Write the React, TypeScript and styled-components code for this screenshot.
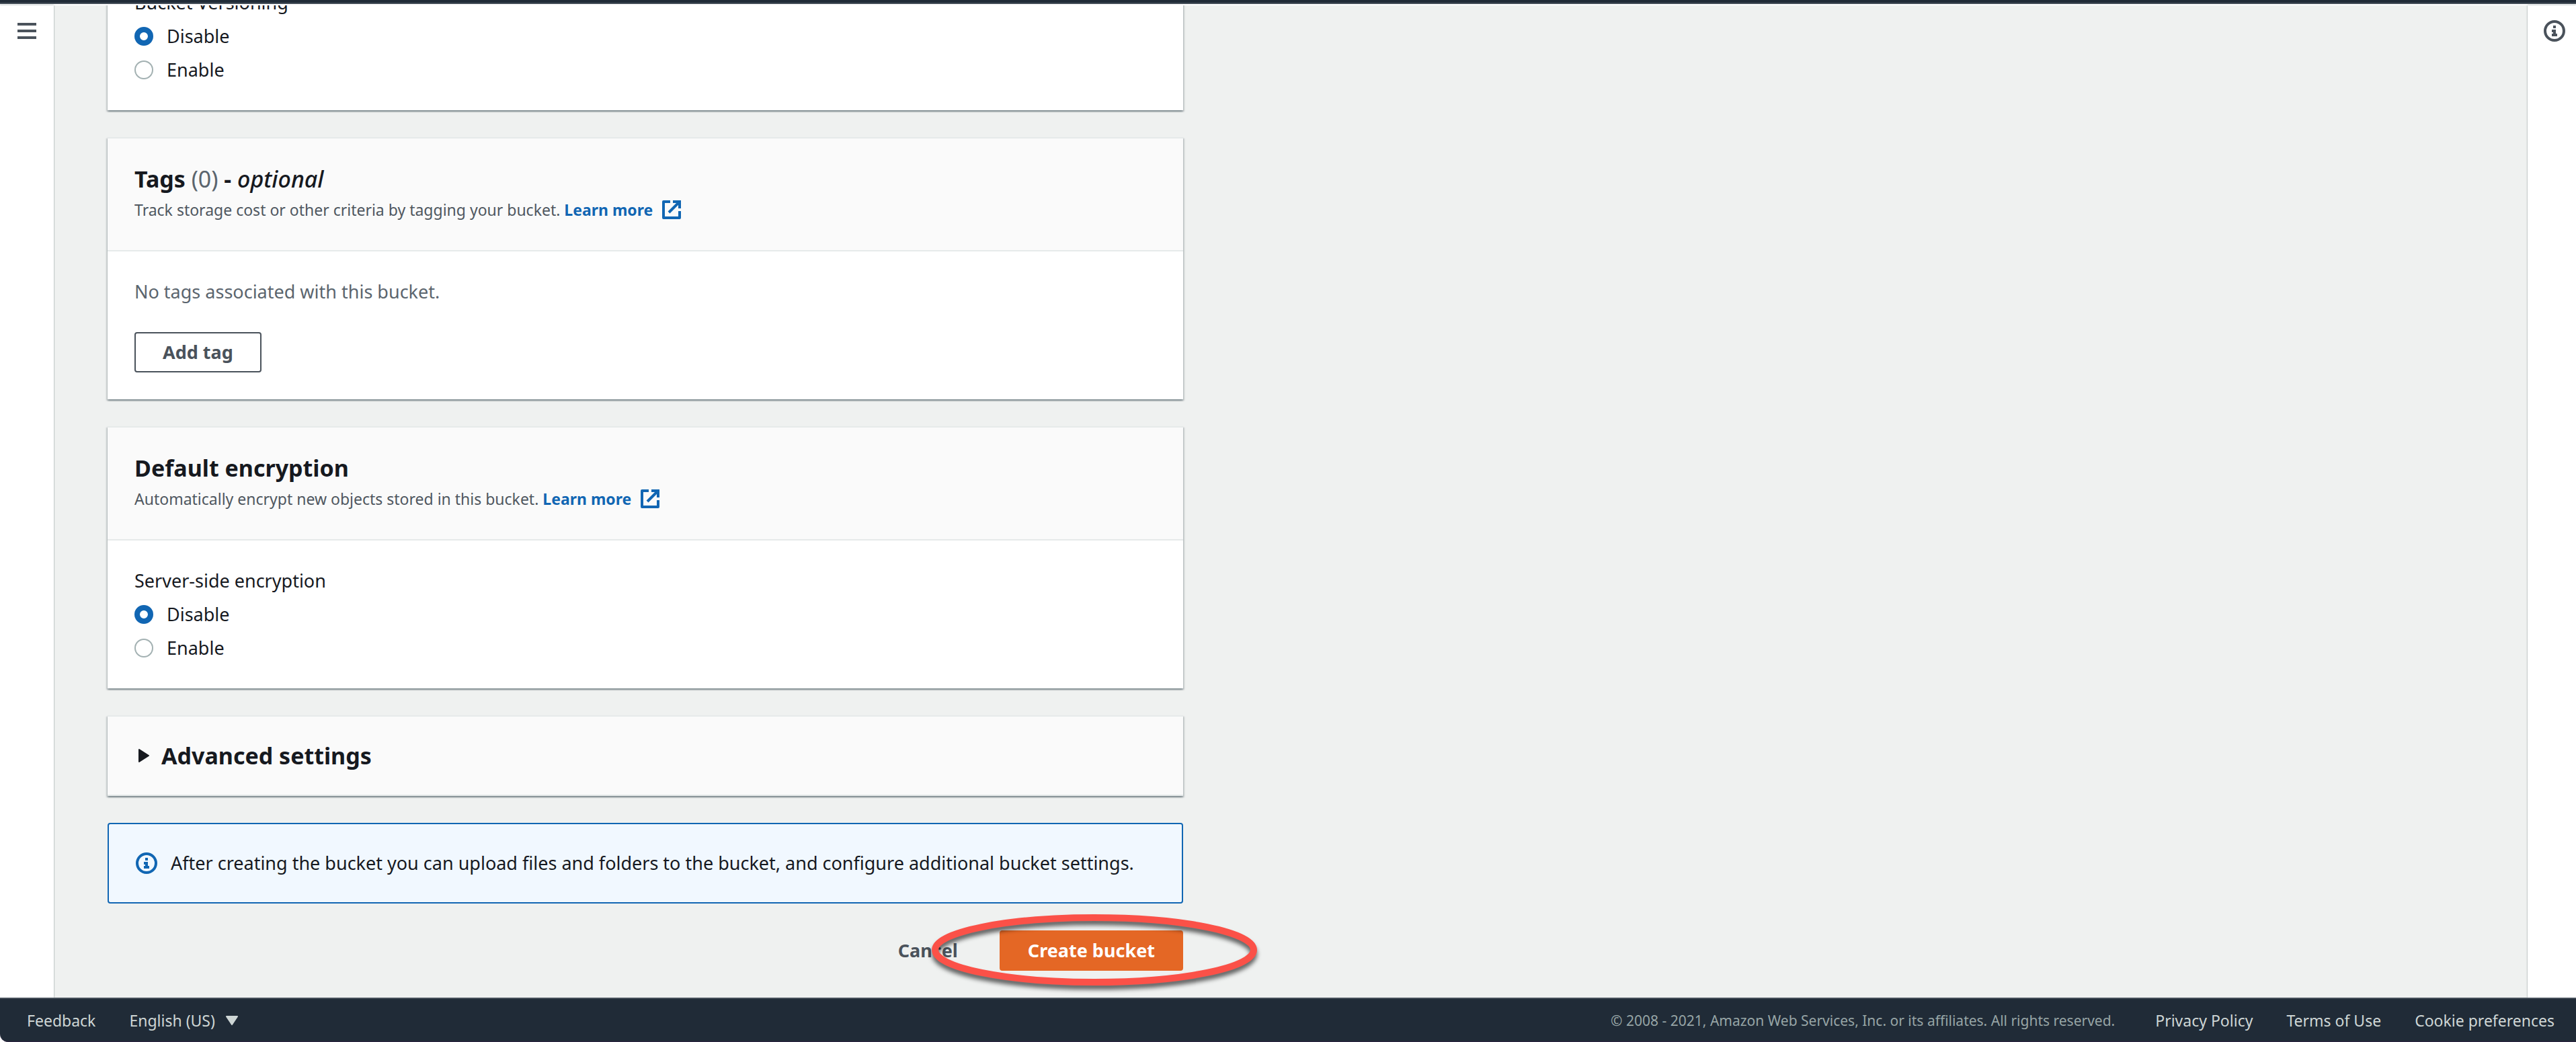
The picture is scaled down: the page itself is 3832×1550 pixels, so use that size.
import React, { useState } from "react";
import styled, { createGlobalStyle, css } from "styled-components";

const color = {
  text: "#16191f",
  secondary: "#4f5760",
  muted: "#5b656e",
  control: "#4a525b",
  page: "#eff1f0",
  divider: "#e6eaea",
  link: "#1166b3",
  orange: "#e46725",
  nav: "#202b37",
  navBorder: "#454f59",
  navText: "#ced6d5",
  navMuted: "#97a5a6",
  annotation: "#fb5148",
};

const GlobalStyle = createGlobalStyle`
  *, *::before, *::after { box-sizing: border-box; }
  body {
    margin: 0;
    background: #ffffff;
    color: ${color.text};
    font-family: "Noto Sans", "Open Sans", sans-serif;
    font-size: 27px;
    line-height: 40px;
  }
  button, select, input { font: inherit; }
`;

const Page = styled.div`
  display: flex;
  flex-direction: column;
  height: 100vh;
  overflow: hidden;
`;

const TopBar = styled.header`
  flex: none;
  height: 6px;
  background: ${color.nav};
  border-bottom: 2px solid ${color.navBorder};
`;

const Workspace = styled.div`
  flex: 1;
  min-height: 0;
  display: flex;
  margin-top: 2px;
`;

const Rail = styled.aside`
  flex: none;
  position: relative;
  z-index: 1;
  display: flex;
  justify-content: center;
  align-items: flex-start;
  background: #ffffff;
  box-shadow: 0 0 2px rgba(0, 28, 36, 0.5);
`;

const LeftRail = styled(Rail)`
  width: 80px;
  padding-top: 22px;
`;

const RightRail = styled(Rail)`
  width: 72px;
  padding: 22px 0 0 8px;
`;

const IconButton = styled.button`
  display: flex;
  padding: 0;
  border: 0;
  background: none;
  color: ${color.control};
  cursor: pointer;
`;

const Main = styled.main`
  flex: 1;
  min-width: 0;
  display: flex;
  flex-direction: column;
  justify-content: flex-end;
  overflow: hidden;
  padding: 0 80px 40px;
  background: ${color.page};
`;

const Form = styled.form`
  display: flex;
  flex-direction: column;
  gap: 40px;
  width: 100%;
  max-width: 1600px;
`;

const Card = styled.section`
  border-top: 2px solid ${color.divider};
  background: #ffffff;
  box-shadow: 0 2px 2px rgba(0, 28, 36, 0.3), 2px 2px 2px rgba(0, 28, 36, 0.15),
    -2px 2px 2px rgba(0, 28, 36, 0.15);
`;

const CardHeader = styled.div`
  padding: 40px;
  border-bottom: 2px solid ${color.divider};
  background: #fafafa;
`;

const CardBody = styled.div`
  display: flex;
  flex-direction: column;
  align-items: flex-start;
  gap: 40px;
  padding: 40px;
`;

const Heading = styled.h2`
  margin: 0;
  font-size: 34px;
  line-height: 40px;
  font-weight: 700;
`;

const Counter = styled.span`
  font-weight: 400;
  color: ${color.muted};
`;

const Optional = styled.em`
  font-weight: 500;
`;

const Description = styled.p`
  margin: 6px 0 0;
  font-size: 23px;
  color: ${color.secondary};
`;

const LearnMore = styled.a`
  display: inline-flex;
  align-items: center;
  gap: 14px;
  color: ${color.link};
  font-weight: 700;
  text-decoration: none;
  vertical-align: top;
`;

const EmptyText = styled.p`
  margin: 0;
  color: ${color.muted};
`;

const RadioGroup = styled.fieldset`
  display: flex;
  flex-direction: column;
  gap: 10px;
  margin: 0;
  padding: 0;
  border: 0;
`;

const Legend = styled.legend`
  padding: 0 0 10px;
`;

const RadioLabel = styled.label`
  display: flex;
  align-items: center;
  gap: 20px;
  cursor: pointer;
`;

const Radio = styled.input`
  appearance: none;
  width: 28px;
  height: 28px;
  margin: 0;
  border: 2px solid #a3b1b2;
  border-radius: 50%;
  background: #ffffff;

  &:checked {
    border: 8px solid ${color.link};
  }
`;

const variants = {
  normal: css`
    border-color: ${color.control};
    background: #ffffff;
    color: ${color.control};
  `,
  link: css`
    border-color: transparent;
    background: transparent;
    color: ${color.control};
  `,
  primary: css`
    border-color: ${color.orange};
    background: ${color.orange};
    color: #ffffff;
  `,
};

const Button = styled.button<{ $variant: keyof typeof variants }>`
  height: 60px;
  padding: 0 40px;
  border: 2px solid;
  border-radius: 4px;
  font-weight: 700;
  line-height: 40px;
  cursor: pointer;
  ${(p) => variants[p.$variant]}
`;

const ExpandButton = styled.button`
  display: flex;
  align-items: center;
  gap: 18px;
  width: 100%;
  padding: 38px 46px;
  border: 0;
  border-bottom: 2px solid ${color.divider};
  background: #fafafa;
  color: ${color.text};
  cursor: pointer;
`;

const Alert = styled.div`
  display: flex;
  align-items: center;
  gap: 20px;
  padding: 38px 40px;
  border: 2px solid ${color.link};
  border-radius: 4px;
  background: #f1f8ff;

  svg {
    flex: none;
    color: ${color.link};
  }
`;

const Actions = styled.div`
  display: flex;
  justify-content: flex-end;
  gap: 20px;
`;

const Highlighted = styled.div`
  position: relative;
`;

const Ring = styled.svg`
  position: absolute;
  top: -24px;
  right: -110px;
  z-index: 2;
  overflow: visible;
  pointer-events: none;
  filter: drop-shadow(0 6px 3px rgba(0, 0, 0, 0.6));
`;

const FooterBar = styled.footer`
  flex: none;
  position: relative;
  z-index: 2;
  display: flex;
  align-items: center;
  justify-content: space-between;
  height: 66px;
  padding: 0 32px 0 40px;
  border-top: 2px solid ${color.navBorder};
  border-bottom: 1px solid #2c2440;
  border-bottom-left-radius: 12px;
  background: ${color.nav};
  color: ${color.navText};
  font-size: 23px;
`;

const FooterGroup = styled.div`
  display: flex;
  align-items: center;
  gap: 50px;
`;

const FooterLink = styled.a`
  color: inherit;
  text-decoration: none;
`;

const Copyright = styled.span`
  margin-right: 10px;
  font-size: 21px;
  color: ${color.navMuted};
`;

const Language = styled.label`
  display: flex;
  align-items: center;
  gap: 16px;
`;

const LanguageSelect = styled.select`
  appearance: none;
  padding: 0;
  border: 0;
  background: none;
  color: inherit;
  cursor: pointer;
`;

function MenuIcon() {
  return (
    <svg width="28" height="32" viewBox="0 0 28 32" aria-hidden="true">
      <path d="M0 4h28v4H0zM0 14h28v4H0zM0 24h28v4H0z" fill="currentColor" />
    </svg>
  );
}

function InfoIcon() {
  return (
    <svg width="32" height="32" viewBox="0 0 32 32" aria-hidden="true">
      <circle cx="16" cy="16" r="14" fill="none" stroke="currentColor" strokeWidth="4" />
      <path d="M14 8h4v4h-4zM12 14h6v6h2v4h-8v-4h2v-2h-2z" fill="currentColor" />
    </svg>
  );
}

function ExternalIcon() {
  return (
    <svg width="28" height="28" viewBox="0 0 28 28" aria-hidden="true">
      <g fill="none" stroke="currentColor" strokeWidth="4">
        <path d="M12 2H2v24h24V16" strokeLinejoin="round" />
        <path d="M16 2h10v10M26 2L10 18" />
      </g>
    </svg>
  );
}

function RadioOptions({ legend, name }: { legend: string; name: string }) {
  return (
    <RadioGroup>
      <Legend>{legend}</Legend>
      <RadioLabel>
        <Radio type="radio" name={name} value="disable" defaultChecked />
        Disable
      </RadioLabel>
      <RadioLabel>
        <Radio type="radio" name={name} value="enable" />
        Enable
      </RadioLabel>
    </RadioGroup>
  );
}

export default function App() {
  const [expanded, setExpanded] = useState(false);

  return (
    <Page>
      <GlobalStyle />
      <TopBar />
      <Workspace>
        <LeftRail>
          <IconButton type="button">
            <MenuIcon />
          </IconButton>
        </LeftRail>
        <Main>
          <Form onSubmit={(e) => e.preventDefault()}>
            <Card>
              <CardBody>
                <RadioOptions legend="Bucket Versioning" name="versioning" />
              </CardBody>
            </Card>

            <Card>
              <CardHeader>
                <Heading>
                  Tags <Counter>(0)</Counter> - <Optional>optional</Optional>
                </Heading>
                <Description>
                  Track storage cost or other criteria by tagging your bucket.{" "}
                  <LearnMore href="#tags">
                    Learn more <ExternalIcon />
                  </LearnMore>
                </Description>
              </CardHeader>
              <CardBody>
                <EmptyText>No tags associated with this bucket.</EmptyText>
                <Button type="button" $variant="normal">
                  Add tag
                </Button>
              </CardBody>
            </Card>

            <Card>
              <CardHeader>
                <Heading>Default encryption</Heading>
                <Description>
                  Automatically encrypt new objects stored in this bucket.{" "}
                  <LearnMore href="#encryption">
                    Learn more <ExternalIcon />
                  </LearnMore>
                </Description>
              </CardHeader>
              <CardBody>
                <RadioOptions legend="Server-side encryption" name="encryption" />
              </CardBody>
            </Card>

            <Card>
              <ExpandButton
                type="button"
                aria-expanded={expanded}
                onClick={() => setExpanded(!expanded)}
              >
                <svg width="16" height="20" viewBox="0 0 16 20" aria-hidden="true">
                  <path
                    d="M1 1l14 9L1 19z"
                    fill="currentColor"
                    stroke="currentColor"
                    strokeWidth="2"
                    strokeLinejoin="round"
                  />
                </svg>
                <Heading as="span">Advanced settings</Heading>
              </ExpandButton>
            </Card>

            <Alert>
              <InfoIcon />
              <span>
                After creating the bucket you can upload files and folders to the bucket, and
                configure additional bucket settings.
              </span>
            </Alert>

            <Actions>
              <Button type="button" $variant="link">
                Cancel
              </Button>
              <Highlighted>
                <Button type="submit" $variant="primary">
                  Create bucket
                </Button>
                <Ring width="484" height="106" viewBox="0 0 484 106" aria-hidden="true">
                  <ellipse
                    cx="242"
                    cy="53"
                    rx="237"
                    ry="48"
                    fill="none"
                    stroke={color.annotation}
                    strokeWidth="10"
                  />
                </Ring>
              </Highlighted>
            </Actions>
          </Form>
        </Main>
        <RightRail>
          <IconButton type="button">
            <InfoIcon />
          </IconButton>
        </RightRail>
      </Workspace>
      <FooterBar>
        <FooterGroup>
          <FooterLink href="#feedback">Feedback</FooterLink>
          <Language>
            <LanguageSelect defaultValue="en">
              <option value="en">English (US)</option>
            </LanguageSelect>
            <svg width="18" height="14" viewBox="0 0 18 14" aria-hidden="true">
              <path
                d="M1 1h16L9 13z"
                fill="currentColor"
                stroke="currentColor"
                strokeWidth="2"
                strokeLinejoin="round"
              />
            </svg>
          </Language>
        </FooterGroup>
        <FooterGroup>
          <Copyright>
            © 2008 - 2021, Amazon Web Services, Inc. or its affiliates. All rights reserved.
          </Copyright>
          <FooterLink href="#privacy">Privacy Policy</FooterLink>
          <FooterLink href="#terms">Terms of Use</FooterLink>
          <FooterLink href="#cookies">Cookie preferences</FooterLink>
        </FooterGroup>
      </FooterBar>
    </Page>
  );
}
